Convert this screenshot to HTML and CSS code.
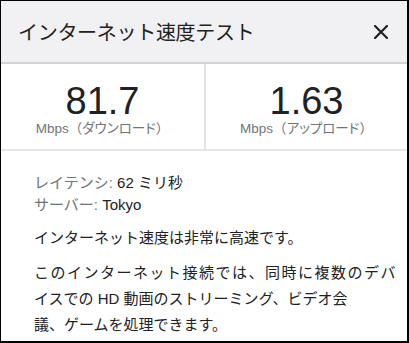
FILE: index.html
```html
<!DOCTYPE html>
<html lang="ja">
<head>
<meta charset="utf-8">
<link rel="stylesheet" href="styles.css">
</head>
<body>
<div class="card">
  <header class="head">
    <h1 class="title">インターネット速度テスト</h1>
    <svg class="close" width="14" height="14" viewBox="0 0 14 14" aria-label="閉じる">
      <path d="M1 1L13 13M13 1L1 13" stroke="#202124" stroke-width="2.2" stroke-linecap="square" fill="none"/>
    </svg>
  </header>
  <section class="stats">
    <div class="stat">
      <div class="num">81.7</div>
      <div class="unit">Mbps（<span class="kana">ダウンロード</span>）</div>
    </div>
    <div class="stat">
      <div class="num">1.63</div>
      <div class="unit">Mbps（<span class="kana">アップロード</span>）</div>
    </div>
  </section>
  <section class="info">
    <div class="row"><span class="key">レイテンシ:</span> 62 ミリ秒</div>
    <div class="row"><span class="key">サーバー:</span> Tokyo</div>
    <p class="para">インターネット速度は非常に高速です。</p>
    <p class="para tall"><span class="ln wide">このインターネット接続では、同時に複数のデバ</span><span class="ln">イスでの HD 動画のストリーミング、ビデオ会</span><span class="ln">議、ゲームを処理できます。</span></p>
  </section>
</div>
</body>
</html>
```
FILE: styles.css
```css
* { box-sizing: border-box; }
html, body { margin: 0; padding: 0; background: #fff; }
body {
  font-family: "Liberation Sans", "Noto Sans CJK JP", sans-serif;
  color: #202124;
}
.card {
  width: 409px;
  height: 343px;
  border-style: solid;
  border-color: #000;
  border-width: 1px 2px 2px 1px;
  overflow: hidden;
  display: flex;
  flex-direction: column;
}
.head {
  height: 63px;
  flex: none;
  background: #f1f1f3;
  border-bottom: 2px solid #d2d2d4;
  display: flex;
  align-items: center;
  justify-content: space-between;
  padding: 0 19px 0 17px;
}
.title {
  margin: 0;
  font-size: 20px;
  font-weight: 400;
  color: #222;
  letter-spacing: -0.3px;
}
.close { display: block; margin-top: 1px; }
.stats {
  height: 87px;
  flex: none;
  display: grid;
  grid-template-columns: 203px 1fr;
  border-bottom: 2px solid #e6e6e6;
}
.stat {
  display: flex;
  flex-direction: column;
  align-items: center;
  padding-top: 15px;
}
.stat + .stat { border-left: 2px solid #e3e3e3; }
.num {
  font-size: 38px;
  line-height: 44px;
  color: #202124;
}
.unit {
  font-size: 13.5px;
  line-height: 16px;
  color: #70757a;
  margin-top: -2px;
  white-space: nowrap;
}
.kana { font-feature-settings: "palt"; }
.info {
  padding: 21px 10px 0 33px;
  font-size: 15px;
}
.row { line-height: 22px; color: #202124; }
.key { color: #70757a; }
.para {
  margin: 11px 0 0;
  line-height: 22px;
  color: #202124;
}
.para.tall { line-height: 26px; }
.ln { display: block; white-space: nowrap; }
.wide { letter-spacing: 1.5px; }
```
